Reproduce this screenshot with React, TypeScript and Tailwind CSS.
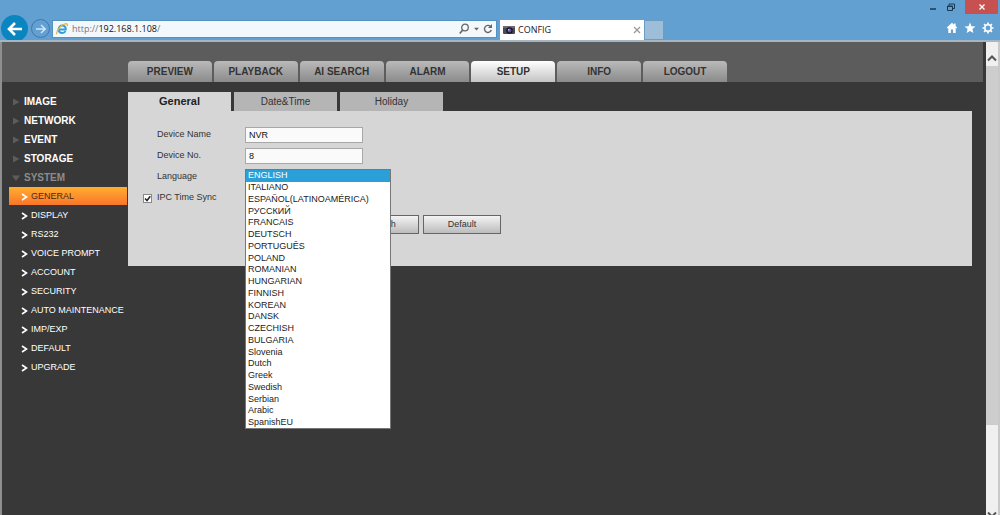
import { useState } from 'react'
import type { ReactNode } from 'react'

const navTabs = ['PREVIEW', 'PLAYBACK', 'AI SEARCH', 'ALARM', 'SETUP', 'INFO', 'LOGOUT']

const sections = ['IMAGE', 'NETWORK', 'EVENT', 'STORAGE']

const systemItems = [
  'GENERAL',
  'DISPLAY',
  'RS232',
  'VOICE PROMPT',
  'ACCOUNT',
  'SECURITY',
  'AUTO MAINTENANCE',
  'IMP/EXP',
  'DEFAULT',
  'UPGRADE',
]

const panelTabs = ['General', 'Date&Time', 'Holiday']

const languages = [
  'ENGLISH',
  'ITALIANO',
  'ESPAÑOL(LATINOAMÉRICA)',
  'РУССКИЙ',
  'FRANCAIS',
  'DEUTSCH',
  'PORTUGUÊS',
  'POLAND',
  'ROMANIAN',
  'HUNGARIAN',
  'FINNISH',
  'KOREAN',
  'DANSK',
  'CZECHISH',
  'BULGARIA',
  'Slovenia',
  'Dutch',
  'Greek',
  'Swedish',
  'Serbian',
  'Arabic',
  'SpanishEU',
]

function IeLogo() {
  return (
    <svg viewBox="0 0 12 12" className="size-3 shrink-0" fill="none">
      <path
        d="M2.6 6.4h7.2c.1-2.3-1.4-3.8-3.5-3.8S2.6 4.2 2.6 6.3s1.5 3.7 3.7 3.7c1.5 0 2.6-.7 3.2-1.9"
        stroke="#2f9fdc"
        strokeWidth="2"
      />
      <path
        d="M1 11.2C-.2 9.6 2.5 5 5.5 2.7 8 .8 10.8.2 11.3 1.4c.2.5 0 1.2-.4 1.9"
        stroke="#e9b93a"
        strokeWidth="1.3"
      />
    </svg>
  )
}

function CameraIcon() {
  return (
    <svg viewBox="0 0 12 10" className="h-2.5 w-3 shrink-0">
      <rect y="1" width="12" height="8" rx="1" fill="#4a4a55" />
      <rect y="1" width="12" height="2" fill="#6d6a72" />
      <circle cx="6.5" cy="5.5" r="3.2" fill="#17152a" />
      <circle cx="6.5" cy="5.5" r="1.9" fill="#5d4fa0" />
      <circle cx="5.8" cy="4.7" r=".8" fill="#d9d4f2" />
    </svg>
  )
}

function Browser() {
  return (
    <header className="h-[42px] overflow-hidden border-b-2 border-[#a5b5c2] bg-[#62a0d2]">
      {/* Window controls */}
      <div className="flex h-3.5 items-start justify-end pr-0.5">
        <button aria-label="Minimize" className="flex h-3.5 w-5 items-center justify-center">
          <svg viewBox="0 0 8 8" className="size-2">
            <path d="M1 6h6" stroke="#1c3850" strokeWidth="1.5" />
          </svg>
        </button>
        <button aria-label="Restore" className="mr-1.5 flex h-3.5 w-4 items-center justify-center">
          <svg viewBox="0 0 8 8" className="size-2" fill="none" stroke="#1c3850">
            <path d="M.5 3h5v4.5h-5zM.5 3.5h5M2 2.500V1h5.500v4.500H6" />
          </svg>
        </button>
        <button aria-label="Close" className="flex h-3.5 w-[33px] items-center justify-center bg-[#c75050]">
          <svg viewBox="0 0 8 8" className="size-2">
            <path d="M1.5 1.5l5 5M6.5 1.5l-5 5" stroke="#fff" strokeWidth="1.3" />
          </svg>
        </button>
      </div>

      <div className="flex items-start pl-px">
        <button
          aria-label="Back"
          className="mt-px flex size-[27px] shrink-0 items-center justify-center rounded-full bg-[#0b85bf]"
        >
          <svg viewBox="0 0 16 16" className="size-4" fill="none" stroke="#fff" strokeWidth="2.6">
            <path d="M15 8H2.5M8 2L2 8l6 6" />
          </svg>
        </button>
        <button
          aria-label="Forward"
          className="mt-[5px] ml-[3px] flex size-[19px] shrink-0 items-center justify-center rounded-full border border-[#3c78b4]"
        >
          <svg viewBox="0 0 12 12" className="size-3" fill="none" stroke="#d3e6f6" strokeWidth="1.5">
            <path d="M1 6h9M6 2l4.2 4L6 10" />
          </svg>
        </button>

        {/* Address bar */}
        <div className="mt-1.5 ml-0.5 flex h-[18px] w-[445px] items-center border border-[#5590c2] bg-[#f3f8fc] px-[3px]">
          <IeLogo />
          <div className="ml-1 flex-1 font-['Open_Sans',sans-serif] text-[9px] text-[#777]">
            http://<span className="text-[#111]">192.168.1.108</span>/
          </div>
          <svg viewBox="0 0 34 12" className="h-3 w-[34px]" fill="none" stroke="#666">
            <circle cx="6" cy="4.5" r="3.3" strokeWidth="1.3" />
            <path d="M3.7 7L.8 10.5" strokeWidth="1.7" />
            <path d="M15 4.8h5l-2.5 2.7z" fill="#666" stroke="none" />
            <path d="M31.5 3.5A3.500 3.500 0 1 0 32.300 7" strokeWidth="1.4" />
            <path d="M33 1v4h-4z" fill="#666" stroke="none" />
          </svg>
        </div>

        <div className="mt-1.5 ml-[3px] flex h-5 w-36 items-center bg-white px-[3px]">
          <CameraIcon />
          <span className="ml-[3px] flex-1 font-['Open_Sans',sans-serif] text-[9px] text-[#222]">CONFIG</span>
          <button aria-label="Close tab">
            <svg viewBox="0 0 8 8" className="size-2">
              <path d="M1 1l6 6M7 1L1 7" stroke="#999" strokeWidth="1.3" />
            </svg>
          </button>
        </div>
        <button aria-label="New tab" className="mt-1.5 h-5 w-5 border border-[#6b9dc4] bg-[#9dbdd8]" />

        <div className="mt-2 mr-1.5 ml-auto flex gap-1.5">
          <button aria-label="Home">
            <svg viewBox="0 0 12 12" className="size-3" fill="#fff">
              <path d="M6 .8L.8 5.6l.8.9.7-.6V11h2.600V7.500h2.200V11h2.600V5.900l.7.6.8-.9-1.600-1.500V1.500H8v1.200z" />
            </svg>
          </button>
          <button aria-label="Favorites">
            <svg viewBox="0 0 12 12" className="size-3" fill="#fff">
              <path d="M6 .5l1.5 3.8 4 .2-3.1 2.6 1 4L6 8.900l-3.400 2.200 1-4L.5 4.500l4-.2z" />
            </svg>
          </button>
          <button aria-label="Tools">
            <svg viewBox="0 0 12 12" className="size-3" fill="none" stroke="#fff">
              <circle cx="6" cy="6" r="3.2" strokeWidth="1.5" />
              <path
                d="M6 .5v2M6 9.500v2M.5 6h2M9.500 6h2M2.100 2.100l1.400 1.400M8.500 8.500l1.400 1.400M2.100 9.900l1.400-1.400M8.500 3.500l1.400-1.400"
                strokeWidth="1.7"
              />
            </svg>
          </button>
        </div>
      </div>
    </header>
  )
}

function Sidebar() {
  return (
    <nav className="w-[126px] shrink-0 text-white">
      {sections.map((section) => (
        <a key={section} href="#" className="flex h-[19px] items-center pl-2.5 text-[10px] font-bold">
          <svg viewBox="0 0 8 8" className="mr-1 size-2" fill="#5c5c5c">
            <path d="M1 .5L7.5 4 1 7.5z" />
          </svg>
          {section}
        </a>
      ))}
      <a href="#" className="flex h-[19px] items-center pl-2.5 text-[10px] font-bold text-[#8c8c8c]">
        <svg viewBox="0 0 8 8" className="mr-1 size-2" fill="#5c5c5c">
          <path d="M0 1.5h8L4 7z" />
        </svg>
        SYSTEM
      </a>
      {systemItems.map((item) => (
        <a
          key={item}
          href="#"
          className={`mr-px ml-[7px] flex h-[19px] items-center border-b border-[#383838] pt-px pl-3 text-[9px] whitespace-nowrap ${
            item === 'GENERAL' ? 'bg-linear-to-b from-[#ffae2e] to-[#f9742a] text-[#4a2a10]' : ''
          }`}
        >
          <svg viewBox="0 0 7 8" className="mr-[3px] h-2 w-[7px] shrink-0" fill="none" stroke="#fff" strokeWidth="1.6">
            <path d="M1 1l4.5 3L1 7" />
          </svg>
          {item}
        </a>
      ))}
    </nav>
  )
}

function Field({ id, label, children }: { id: string; label: string; children: ReactNode }) {
  return (
    <div className="flex h-5 items-center pl-[29px]">
      <label htmlFor={id} className="w-[88px]">
        {label}
      </label>
      {children}
    </div>
  )
}

function GeneralPanel() {
  const [language, setLanguage] = useState('ENGLISH')

  return (
    <div className="min-w-0 flex-1">
      <div className="flex gap-[3px]">
        {panelTabs.map((tab) => (
          <button
            key={tab}
            className={`h-[19px] w-[103px] ${
              tab === 'General' ? 'bg-[#d6d6d6] text-[11px] font-bold text-[#222]' : 'bg-[#b5b5b5] text-[10px] text-[#333]'
            }`}
          >
            {tab}
          </button>
        ))}
      </div>

      <form className="flex flex-col gap-px bg-[#d6d6d6] pt-3.5 pb-8 text-[9px] text-[#333]">
        <Field id="device-name" label="Device Name">
          <input
            id="device-name"
            defaultValue="NVR"
            className="h-4 w-[118px] border border-[#a8a8a8] bg-[#fafafa] px-[3px] text-[#111]"
          />
        </Field>
        <Field id="device-no" label="Device No.">
          <input
            id="device-no"
            defaultValue="8"
            className="h-4 w-[118px] border border-[#a8a8a8] bg-[#fafafa] px-[3px] text-[#111]"
          />
        </Field>
        <Field id="language" label="Language">
          {/* Open language list */}
          <div className="relative h-4">
            <select
              id="language"
              size={22}
              value={language}
              onChange={(e) => setLanguage(e.target.value)}
              className="absolute top-0 left-0 z-10 h-[260px] w-[146px] overflow-hidden border border-[#777] bg-white bg-none text-[9px] text-[#222]"
            >
              {languages.map((name) => (
                <option
                  key={name}
                  className="h-3 min-h-0 px-0.5 py-0 leading-3 checked:bg-linear-to-b checked:from-[#2a9fd8] checked:to-[#2a9fd8] checked:[-webkit-text-fill-color:white] nth-[4n]:h-[11px]"
                >
                  {name}
                </option>
              ))}
            </select>
          </div>
        </Field>
        <div className="flex h-5 items-center pl-[15px]">
          <span className="relative flex size-[9px]">
            <input
              id="ipc-time-sync"
              type="checkbox"
              defaultChecked
              className="peer size-[9px] appearance-none border border-[#888] bg-white"
            />
            <svg
              viewBox="0 0 9 9"
              className="pointer-events-none absolute inset-0 hidden size-[9px] peer-checked:block"
              fill="none"
              stroke="#222"
              strokeWidth="1.5"
            >
              <path d="M2 4.5l2 2L7.300 2.200" />
            </svg>
          </span>
          <label htmlFor="ipc-time-sync" className="ml-[5px]">
            IPC Time Sync
          </label>
        </div>
        <div className="mt-1.5 flex gap-1 pl-[213px]">
          {['Refresh', 'Default'].map((name) => (
            <button
              key={name}
              type="button"
              className="h-[19px] w-[78px] border border-[#666] bg-linear-to-b from-[#f4f4f4] to-[#bcbcbc] text-[#333]"
            >
              {name}
            </button>
          ))}
        </div>
      </form>
    </div>
  )
}

function Scrollbar() {
  return (
    <div className="flex w-3.5 shrink-0 flex-col items-center border-r-2 border-[#c9c9c9] bg-[#f0f0f0]">
      <svg viewBox="0 0 10 8" className="mt-3 mb-1 h-2 w-2.5" fill="none" stroke="#555" strokeWidth="2">
        <path d="M1 6.5l4-4 4 4" />
      </svg>
      <div className="h-[76%] w-full bg-[#cdcdcd]" />
      <svg
        viewBox="0 0 10 8"
        className="mt-auto h-1 w-2.5"
        preserveAspectRatio="xMidYMin slice"
        fill="none"
        stroke="#555"
        strokeWidth="2"
      >
        <path d="M1 1.5l4 4 4-4" />
      </svg>
    </div>
  )
}

export default function App() {
  return (
    <div className="flex min-h-screen flex-col bg-[#383838] font-['Liberation_Sans',Arial,sans-serif]">
      <Browser />

      <div className="flex flex-1 border-l-2 border-[#8f8f8f]">
        <div className="min-w-0 flex-1">
          {/* Main navigation */}
          <div className="mr-[3px] flex h-10 items-end bg-[#5c5c5c] pl-[126px]">
            <nav className="grid w-[599px] grid-cols-7 gap-0.5">
              {navTabs.map((tab) => (
                <a
                  key={tab}
                  href="#"
                  className={`flex h-[21px] items-center justify-center rounded-t-[4px] bg-linear-to-b text-[10px] font-bold text-[#333] ${
                    tab === 'SETUP' ? 'from-white to-[#c4c4c4]' : 'from-[#bababa] to-[#8b8b8b]'
                  }`}
                >
                  {tab}
                </a>
              ))}
            </nav>
          </div>

          <div className="mt-2.5 mr-3.5 flex">
            <Sidebar />
            <GeneralPanel />
          </div>
        </div>
        <Scrollbar />
      </div>
    </div>
  )
}
